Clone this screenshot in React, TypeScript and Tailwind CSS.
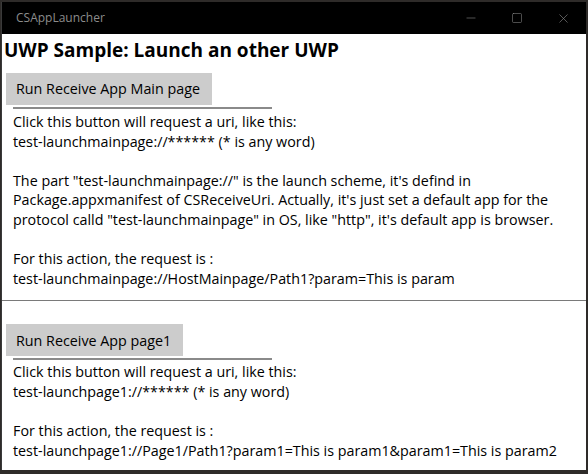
import { Minus, Square, X } from 'lucide-react';

const FONT = { fontFamily: '"Open Sans", "Noto Sans", sans-serif' };

function UnderlinedButton({ label, width }: { label: string; width: string }) {
  return (
    <div className="flex flex-col">
      <div className={`ml-[4px] h-[32px] ${width} bg-[#cccccc] flex items-center pl-[10px] text-[14.3px] text-black`}>
        {label}
      </div>
      <div className="ml-[11px] mt-[2px] w-[259px] h-[2px] bg-[#8a8a8a]" />
    </div>
  );
}

export default function App() {
  return (
    <div className="w-[588px] h-[474px] bg-[#2e2b29] pt-[2px] pl-[1px]" style={FONT}>
      <div className="w-[585px] h-[468px] bg-black flex flex-col border-l border-[#3a3a3a]">
        {/* title bar */}
        <div className="h-[32px] flex items-center justify-between text-[#8c8c8c]">
          <span className="pl-[14px] text-[12px]">CSAppLauncher</span>
          <div className="flex items-center h-full">
            <div className="w-[46px] h-full flex items-center justify-center"><Minus size={14} strokeWidth={1} /></div>
            <div className="w-[46px] h-full flex items-center justify-center"><Square size={12} strokeWidth={1.1} /></div>
            <div className="w-[46px] h-full flex items-center justify-center"><X size={15} strokeWidth={1} /></div>
          </div>
        </div>

        <div className="flex-1 bg-white text-black flex flex-col">
          <h1 className="pl-[2px] pt-[3px] text-[19px] font-bold leading-[26px]">UWP Sample: Launch an other UWP</h1>

          <div className="mt-[10px]">
            <UnderlinedButton label="Run Receive App Main page" width="w-[206px]" />
            <div className="pl-[11px] pt-[3px] text-[14.3px] leading-[19.6px] whitespace-nowrap">
              <p>Click this button will request a uri, like this:</p>
              <p>test-launchmainpage://****** (* is any word)</p>
              <p>&nbsp;</p>
              <p>The part "test-launchmainpage://" is the launch scheme, it's defind in</p>
              <p>Package.appxmanifest of CSReceiveUri. Actually, it's just set a default app for the</p>
              <p>protocol calld "test-launchmainpage" in OS, like "http", it's default app is browser.</p>
              <p>&nbsp;</p>
              <p>For this action, the request is :</p>
              <p>test-launchmainpage://HostMainpage/Path1?param=This is param</p>
            </div>
          </div>

          <div className="mt-[12px] h-px bg-[#7a7a7a]" />

          <div className="mt-[23px]">
            <UnderlinedButton label="Run Receive App page1" width="w-[177px]" />
            <div className="pl-[11px] pt-[2px] text-[14.3px] leading-[19.6px] whitespace-nowrap">
              <p>Click this button will request a uri, like this:</p>
              <p>test-launchpage1://****** (* is any word)</p>
              <p>&nbsp;</p>
              <p>For this action, the request is :</p>
              <p>test-launchpage1://Page1/Path1?param1=This is param1&amp;param1=This is param2</p>
            </div>
          </div>
        </div>
      </div>
    </div>
  );
}
